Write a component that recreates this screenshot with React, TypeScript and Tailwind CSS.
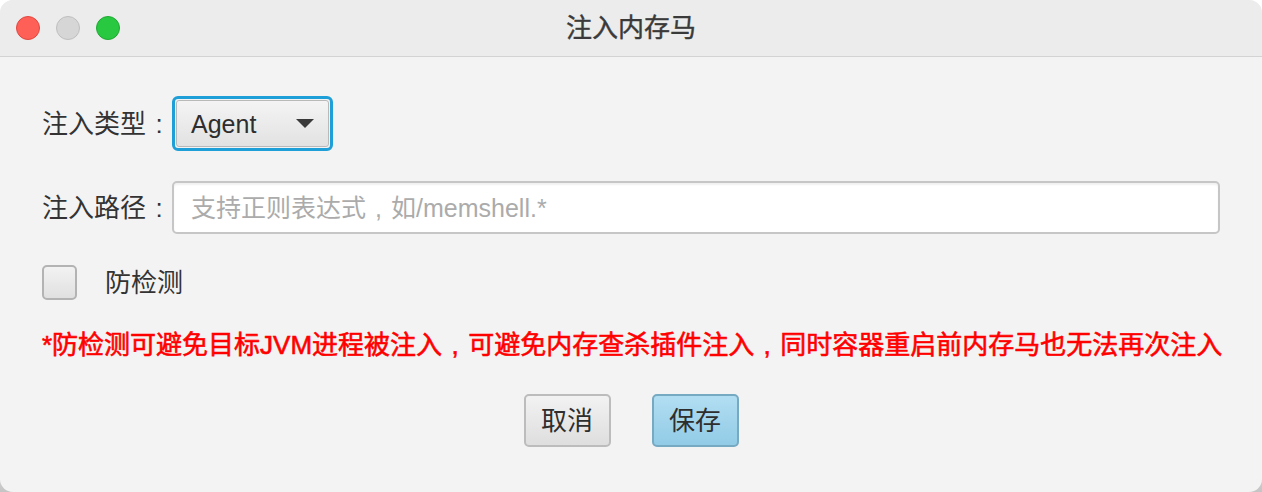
import React from "react";

const FONT = { fontFamily: '"Liberation Sans", "Noto Sans CJK SC", sans-serif' };
const P = ({ c }: { c: string }) => (
  <span className="inline-block w-[1em] text-center">{c}</span>
);

export default function App() {
  return (
    <div
      className="w-[1262px] h-[492px] bg-[linear-gradient(to_bottom,#ffffff_85%,#c4c4c4)] overflow-hidden"
      style={FONT}
    >
      <div className="w-full h-full rounded-[13px] overflow-hidden bg-[#f3f3f3] flex flex-col">
        {/* Title bar */}
        <div className="relative h-[57px] shrink-0 bg-[#ececec] border-b border-[#d3d3d3] flex items-center justify-center">
          <div className="absolute left-[16px] top-[16px] flex gap-[16px]">
            <div className="w-[24px] h-[24px] rounded-full bg-[#fe5f57] border border-[#e1473f]" />
            <div className="w-[24px] h-[24px] rounded-full bg-[#d6d6d6] border border-[#bfbfbf]" />
            <div className="w-[24px] h-[24px] rounded-full bg-[#28c840] border border-[#1fa934]" />
          </div>
          <div className="text-[26px] leading-[30px] text-[#3a3a3a] [-webkit-text-stroke:0.4px_#3a3a3a]">注入内存马</div>
        </div>

        {/* Body */}
        <div className="flex flex-col px-[42px] pt-[39px]">
          {/* Row 1 */}
          <div className="flex items-center h-[55px]">
            <div className="w-[130px] shrink-0 whitespace-nowrap text-[26px] leading-[30px] text-[#333333]">注入类型<P c=":" /></div>
            <div className="w-[161px] h-[55px] rounded-[6px] border-[3px] border-[#1e9fd8] p-px">
              <div className="w-full h-full rounded-[3px] border border-[#b9b9b9] bg-[linear-gradient(to_bottom,#f4f4f4,#e2e2e2)] flex items-center pl-[14px] pr-[14px] justify-between">
                <span className="text-[25px] leading-[30px] text-[#2e2e2e]">Agent</span>
                <svg width="18" height="9" viewBox="0 0 18 9">
                  <path d="M0 0 L18 0 L9 9 Z" fill="#3a3a3a" />
                </svg>
              </div>
            </div>
          </div>

          {/* Row 2 */}
          <div className="flex items-center h-[53px] mt-[30px]">
            <div className="w-[130px] shrink-0 whitespace-nowrap text-[26px] leading-[30px] text-[#333333]">注入路径<P c=":" /></div>
            <div className="flex-1 h-[53px] rounded-[5px] border-2 border-[#c6c6c6] bg-white shadow-[inset_0_2px_2px_rgba(0,0,0,0.06)] flex items-center pl-[17px]">
              <span className="text-[25px] leading-[30px] text-[#ababab] whitespace-nowrap">支持正则表达式<P c="," />如/memshell.*</span>
            </div>
          </div>

          {/* Row 3 */}
          <div className="flex items-center h-[35px] mt-[31px]">
            <div className="w-[35px] h-[35px] rounded-[5px] border-2 border-[#b3b3b3] bg-[linear-gradient(to_bottom,#f2f2f2,#e0e0e0)]" />
            <div className="ml-[28px] text-[26px] leading-[30px] text-[#333333]">防检测</div>
          </div>

          {/* Warning */}
          <div className="mt-[30px] text-[26px] leading-[30px] text-[#ff0000] whitespace-nowrap [-webkit-text-stroke:0.6px_#ff0000]">
            *防检测可避免目标JVM进程被注入<P c="," />可避免内存查杀插件注入<P c="," />同时容器重启前内存马也无法再次注入
          </div>

          {/* Buttons */}
          <div className="flex justify-center gap-[41px] mt-[34px]">
            <div className="w-[87px] h-[53px] rounded-[5px] border-2 border-[#bcbcbc] bg-[linear-gradient(to_bottom,#f2f2f2,#dedede)] flex items-center justify-center text-[26px] leading-[30px] text-[#2e2e2e]">
              取消
            </div>
            <div className="w-[87px] h-[53px] rounded-[5px] border-2 border-[#76a9c2] bg-[linear-gradient(to_bottom,#b2def2,#92cbe6)] flex items-center justify-center text-[26px] leading-[30px] text-[#2e2e2e]">
              保存
            </div>
          </div>
        </div>
      </div>
    </div>
  );
}
